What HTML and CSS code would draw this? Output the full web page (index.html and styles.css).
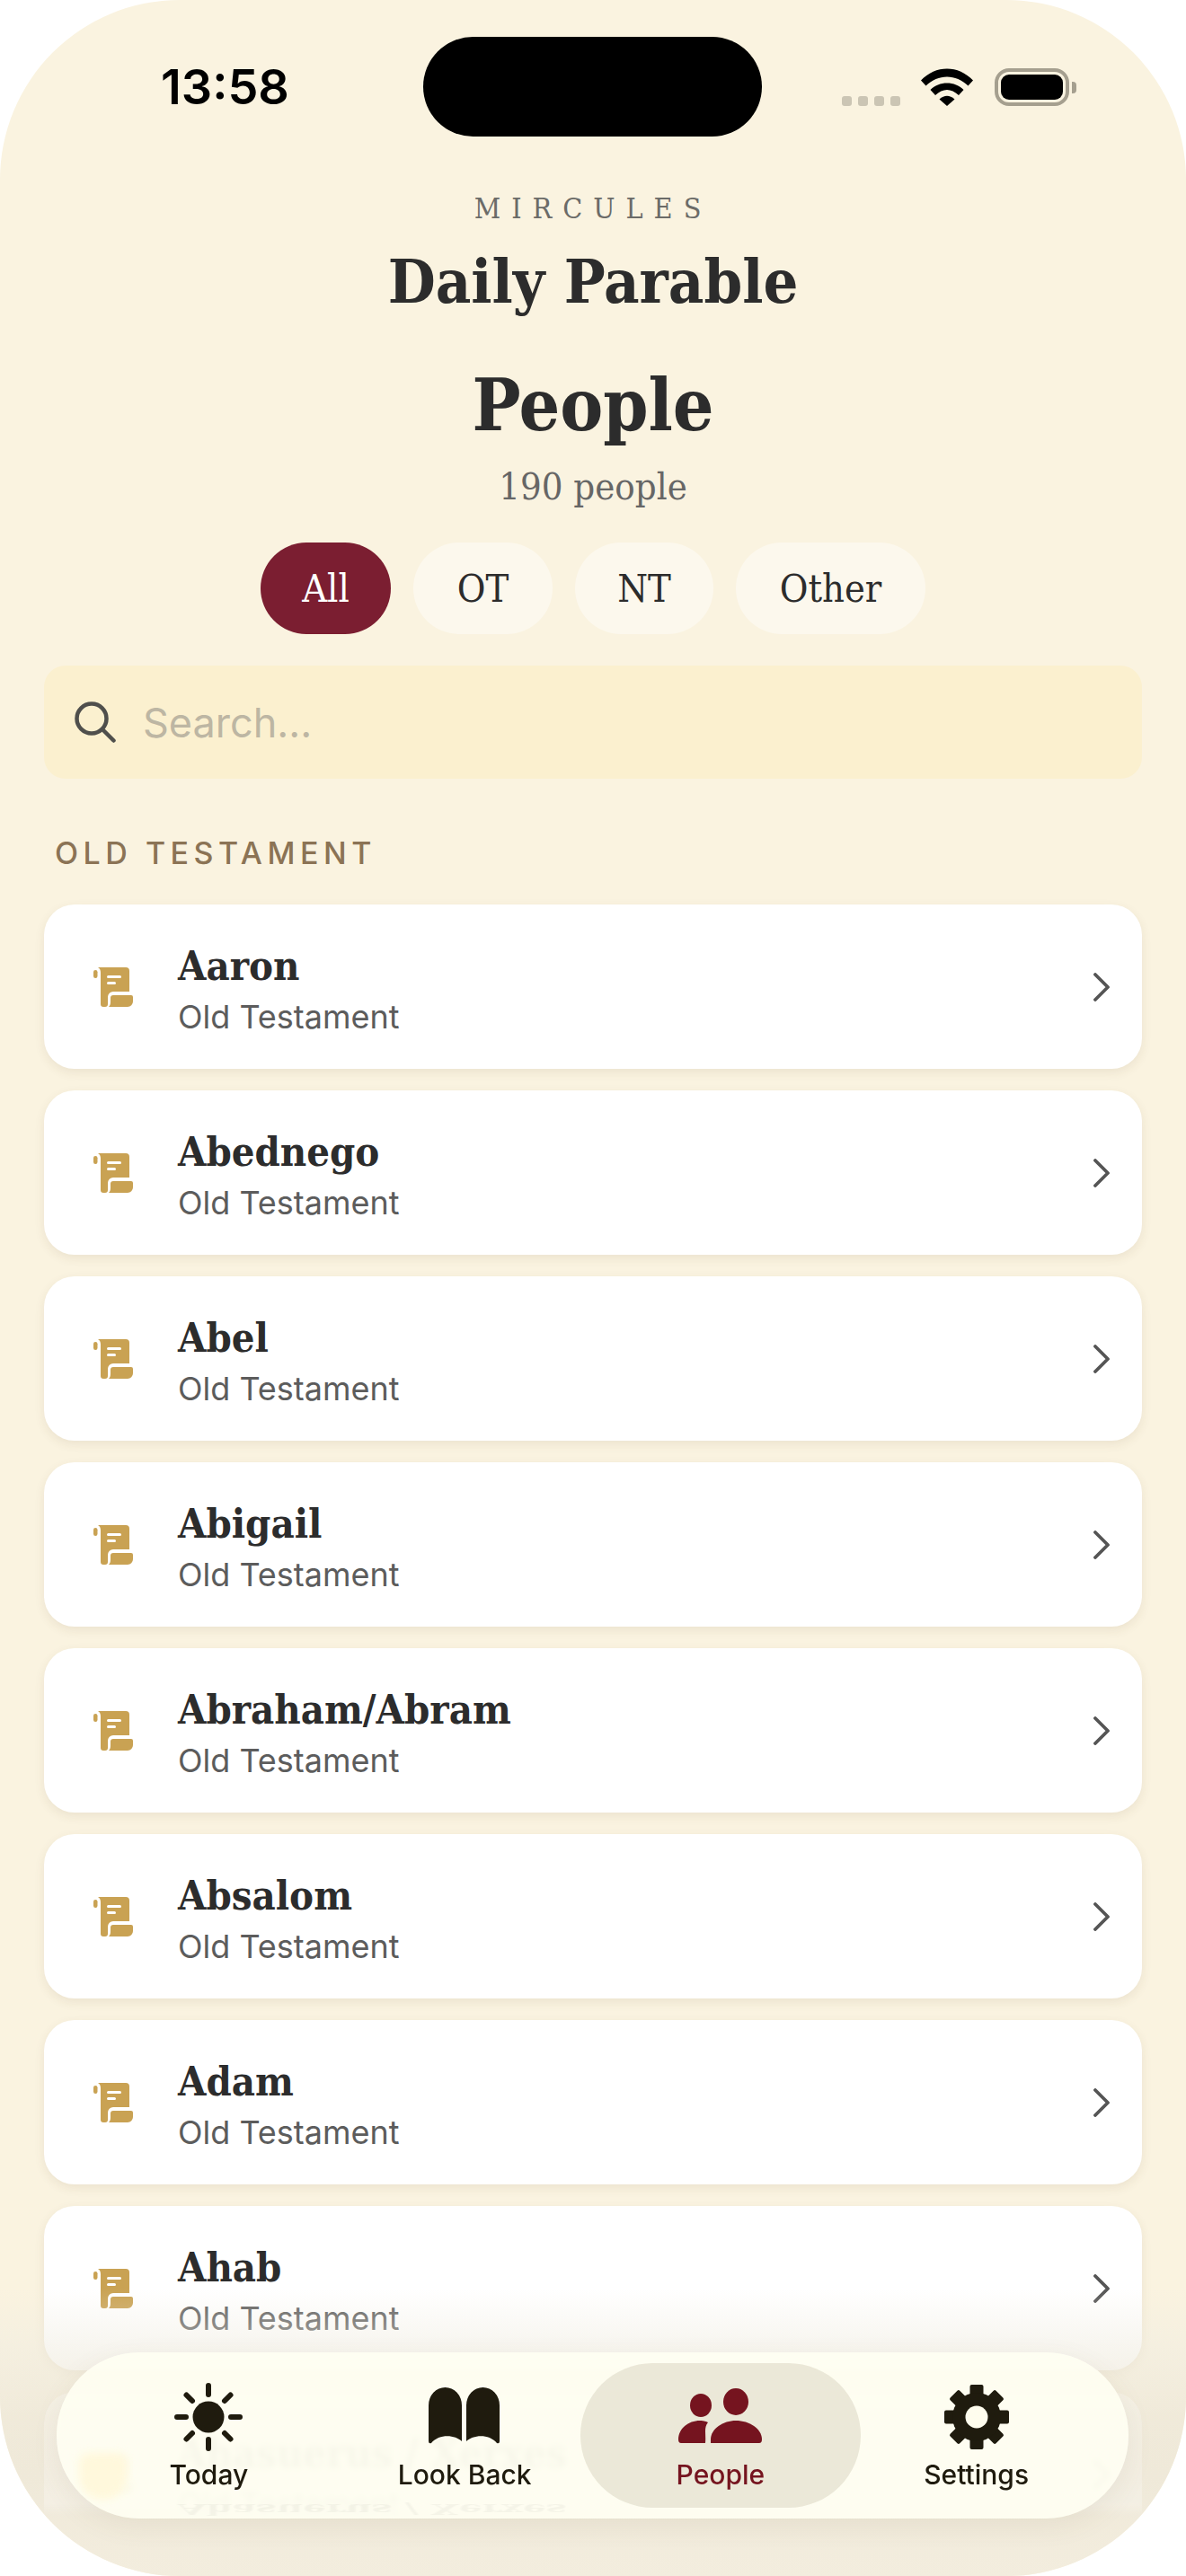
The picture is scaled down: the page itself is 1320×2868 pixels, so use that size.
FILE: index.html
```html
<!DOCTYPE html>
<html lang="en">
<head>
    <meta charset="UTF-8">
    <meta name="viewport" content="width=device-width, initial-scale=1.0">
    <title>Daily Parable - People</title>
    <link rel="stylesheet" href="styles.css">
</head>
<body>
    <svg class="icon-defs" width="0" height="0" aria-hidden="true">
        <symbol id="scroll" viewBox="0 0 44 44">
            <rect x="0" y="3" width="4.5" height="9" rx="2.2"/>
            <path d="M5 0H36a4 4 0 0 1 4 4V27H22a6 6 0 0 0-6 6V41a3 3 0 0 1-3 3H11a3 3 0 0 1-3-3V6C8 3 7 1 5 0Z"/>
            <path d="M22 31H42a2 2 0 0 1 2 2V38a6 6 0 0 1-6 6H17c2-2 2-4 2-7V34a3 3 0 0 1 3-3Z"/>
            <rect x="15" y="9" width="16" height="3" rx="1.500" fill="#fff"/>
            <rect x="15" y="16" width="10" height="3" rx="1.500" fill="#fff"/>
        </symbol>
        <symbol id="chevron" viewBox="0 0 20 32">
            <path d="M2 2L16 16L2 30" fill="none" stroke="currentColor" stroke-width="3.8" stroke-linecap="round" stroke-linejoin="round"/>
        </symbol>
    </svg>

    <div class="phone">
        <div class="status-bar">
            <span class="time">13:58</span>
            <div class="island"></div>
            <div class="status-icons">
                <div class="signal"><i></i><i></i><i></i><i></i></div>
                <svg class="wifi" viewBox="0 0 58 42">
                    <path d="M0 13.5C16 -4 42 -4 58 13.5L52.5 19.500C39 6 19 6 5.500 19.500Z"/>
                    <path d="M10.500 24C20 14 38 14 47.500 24L42 30C33.500 22 24.500 22 16 30Z"/>
                    <path d="M20.500 34.500C26 29.500 32 29.500 37.500 34.500L29 42Z"/>
                </svg>
                <div class="battery"><div class="battery-level"></div></div>
            </div>
        </div>

        <header class="page-header">
            <div class="brand">MIRCULES</div>
            <div class="app-name">Daily Parable</div>
            <h1>People</h1>
            <p class="count">190 people</p>
        </header>

        <div class="filters">
            <button class="chip active">All</button>
            <button class="chip">OT</button>
            <button class="chip">NT</button>
            <button class="chip">Other</button>
        </div>

        <div class="search">
            <svg class="search-icon" viewBox="0 0 46 46">
                <circle cx="19" cy="19" r="16.500"/>
                <path d="M31 31L43.500 43.500"/>
            </svg>
            <span class="search-placeholder">Search...</span>
        </div>

        <h2 class="section-title">OLD TESTAMENT</h2>

        <ul class="person-list">
            <li class="person">
                <svg class="scroll"><use href="#scroll"/></svg>
                <div class="person-text"><div class="person-name">Aaron</div><div class="person-sub">Old Testament</div></div>
                <svg class="chevron"><use href="#chevron"/></svg>
            </li>
            <li class="person">
                <svg class="scroll"><use href="#scroll"/></svg>
                <div class="person-text"><div class="person-name">Abednego</div><div class="person-sub">Old Testament</div></div>
                <svg class="chevron"><use href="#chevron"/></svg>
            </li>
            <li class="person">
                <svg class="scroll"><use href="#scroll"/></svg>
                <div class="person-text"><div class="person-name">Abel</div><div class="person-sub">Old Testament</div></div>
                <svg class="chevron"><use href="#chevron"/></svg>
            </li>
            <li class="person">
                <svg class="scroll"><use href="#scroll"/></svg>
                <div class="person-text"><div class="person-name">Abigail</div><div class="person-sub">Old Testament</div></div>
                <svg class="chevron"><use href="#chevron"/></svg>
            </li>
            <li class="person">
                <svg class="scroll"><use href="#scroll"/></svg>
                <div class="person-text"><div class="person-name">Abraham/Abram</div><div class="person-sub">Old Testament</div></div>
                <svg class="chevron"><use href="#chevron"/></svg>
            </li>
            <li class="person">
                <svg class="scroll"><use href="#scroll"/></svg>
                <div class="person-text"><div class="person-name">Absalom</div><div class="person-sub">Old Testament</div></div>
                <svg class="chevron"><use href="#chevron"/></svg>
            </li>
            <li class="person">
                <svg class="scroll"><use href="#scroll"/></svg>
                <div class="person-text"><div class="person-name">Adam</div><div class="person-sub">Old Testament</div></div>
                <svg class="chevron"><use href="#chevron"/></svg>
            </li>
            <li class="person">
                <svg class="scroll"><use href="#scroll"/></svg>
                <div class="person-text"><div class="person-name">Ahab</div><div class="person-sub">Old Testament</div></div>
                <svg class="chevron"><use href="#chevron"/></svg>
            </li>
            <li class="person">
                <svg class="scroll"><use href="#scroll"/></svg>
                <div class="person-text"><div class="person-name">Ahasuerus / Xerxes</div><div class="person-sub">Old Testament</div></div>
                <svg class="chevron"><use href="#chevron"/></svg>
            </li>
        </ul>

        <div class="bottom-fade"></div>

        <nav class="tab-bar">
            <span class="ghost-title" aria-hidden="true">Ahasuerus / Xerxes</span>
            <a class="tab" href="#">
                <svg class="tab-icon round" width="76" height="76" viewBox="0 0 76 76">
                    <circle cx="38" cy="38" r="17.500"/>
                    <g class="rays">
                        <path d="M38 3V13M38 63V73M3 38H13M63 38H73M13.500 13.500L20 20M56 56L62.500 62.500M62.500 13.500L56 20M20 56L13.500 62.500"/>
                    </g>
                </svg>
                <span>Today</span>
            </a>
            <a class="tab" href="#">
                <svg class="tab-icon" width="80" height="64" viewBox="0 0 80 64">
                    <path d="M0 20A18.500 20 0 0 1 37 20V60C30 53 12 51 3 62Q0 63 0 60Z"/>
                    <path d="M42 20A18.500 20 0 0 1 79 20V60Q79 63 76 62C67 51 49 53 42 60Z"/>
                </svg>
                <span>Look Back</span>
            </a>
            <a class="tab active" href="#">
                <svg class="tab-icon" width="94" height="64" viewBox="0 0 94 64">
                    <ellipse cx="25" cy="20" rx="12" ry="13"/>
                    <ellipse cx="64" cy="16" rx="14" ry="15"/>
                    <path d="M0 58C0 46 11 37 24 37C28 37 31 38 33 39C28 45 31 52 30 62H3Q0 62 0 58Z"/>
                    <path d="M36 62Q36 62 36 58C36 46 50 37 64 37C79 37 93 46 93 58Q93 62 90 62Z"/>
                </svg>
                <span>People</span>
            </a>
            <a class="tab" href="#">
                <svg class="tab-icon round" width="76" height="76" viewBox="0 0 76 76">
                    <g transform="translate(38 38)">
                        <rect x="-7.500" y="-36" width="15" height="72" rx="2"/>
                        <rect x="-7.500" y="-36" width="15" height="72" rx="2" transform="rotate(45)"/>
                        <rect x="-7.500" y="-36" width="15" height="72" rx="2" transform="rotate(90)"/>
                        <rect x="-7.500" y="-36" width="15" height="72" rx="2" transform="rotate(135)"/>
                        <circle r="27"/>
                        <circle class="gear-hole" r="12.500"/>
                    </g>
                </svg>
                <span>Settings</span>
            </a>
        </nav>
    </div>
</body>
</html>
```

FILE: styles.css
```css
* {
    box-sizing: border-box;
}

body {
    margin: 0;
    background-color: #fff;
    font-family: 'Inter', sans-serif;
    color: #2c2c2c;
}

.icon-defs {
    position: absolute;
}

.phone {
    position: relative;
    width: 1320px;
    height: 2868px;
    overflow: hidden;
    border-radius: 200px;
    background-color: #faf3e0;
    padding: 0 49px;
}

/* status bar */
.status-bar {
    display: flex;
    align-items: center;
    height: 152px;
    padding-top: 41px;
    margin: 0 -49px;
}

.time {
    width: 471px;
    padding-left: 179px;
    font-size: 54px;
    font-weight: 600;
    color: #000;
}

.island {
    width: 377px;
    height: 111px;
    border-radius: 56px;
    background-color: #000;
}

.status-icons {
    display: flex;
    align-items: flex-end;
    margin-left: 89px;
}

.signal {
    display: flex;
    gap: 7px;
    margin-right: 23px;
}

.signal i {
    width: 11px;
    height: 11px;
    border-radius: 3px;
    background-color: #cbc5b4;
}

.wifi {
    width: 58px;
    height: 42px;
    margin-right: 24px;
}

.battery {
    position: relative;
    width: 83px;
    height: 42px;
    padding: 3px;
    border: 4px solid #a59f8f;
    border-radius: 16px;
}

.battery::after {
    content: "";
    position: absolute;
    right: -12px;
    top: 11px;
    width: 5px;
    height: 13px;
    border-radius: 0 4px 4px 0;
    background-color: #a59f8f;
}

.battery-level {
    height: 100%;
    border-radius: 9px;
    background-color: #000;
}

/* header */
.page-header {
    text-align: center;
    font-family: 'DejaVu Serif', 'Liberation Serif', serif;
    font-stretch: condensed;
}

.brand {
    margin-top: 60px;
    font-size: 32px;
    line-height: 40px;
    letter-spacing: 12px;
    color: #6b6b68;
}

.app-name {
    margin-top: 17px;
    font-size: 68px;
    line-height: 88px;
    font-weight: 700;
}

.page-header h1 {
    margin: 44px 0 0;
    font-size: 80px;
    line-height: 100px;
    font-weight: 700;
}

.count {
    margin: 14px 0 0;
    font-size: 41.500px;
    line-height: 54px;
    color: #666;
}

/* filter chips */
.filters {
    display: grid;
    grid-template-columns: 145px 155px 154px 211px;
    justify-content: center;
    gap: 25px;
    margin-top: 35px;
}

.chip {
    height: 102px;
    padding: 0;
    border: none;
    border-radius: 51px;
    background-color: #fcf8ed;
    font-family: 'DejaVu Serif', 'Liberation Serif', serif;
    font-stretch: condensed;
    font-size: 43px;
    color: #2c2c2c;
}

.chip.active {
    background-color: #7b1e31;
    color: #fff;
}

/* search */
.search {
    display: flex;
    align-items: center;
    gap: 30px;
    height: 126px;
    margin-top: 35px;
    padding: 0 34px;
    border-radius: 24px;
    background-color: #fbf0cf;
}

.search-icon {
    width: 46px;
    height: 46px;
    fill: none;
    stroke: #4f4f4c;
    stroke-width: 4.5;
    stroke-linecap: round;
}

.search-placeholder {
    font-size: 45px;
    color: #bdb6a3;
}

.section-title {
    margin: 63px 0 0 12px;
    font-size: 34px;
    line-height: 40px;
    font-weight: 500;
    letter-spacing: 5.500px;
    color: #8b7355;
}

/* person rows */
.person-list {
    display: flex;
    flex-direction: column;
    gap: 24px;
    margin: 37px 0 0;
    padding: 0;
    list-style: none;
}

.person {
    display: flex;
    align-items: center;
    flex-shrink: 0;
    height: 183px;
    padding: 0 34px 0 55px;
    border-radius: 34px;
    background-color: #fff;
    box-shadow: 0 4px 12px rgba(90, 70, 30, 0.09);
}

/* this row only shows faintly through the tab bar */
.person:last-child {
    position: relative;
    z-index: 1;
    opacity: 0.25;
    box-shadow: none;
    mask-image: linear-gradient(to bottom, #000 68%, transparent 76%);
}

.scroll {
    width: 44px;
    height: 44px;
    fill: #c9a253;
    flex-shrink: 0;
}

.person-text {
    flex: 1;
    margin-left: 50px;
    padding-top: 3px;
}

.person-name {
    font-family: 'DejaVu Serif', 'Liberation Serif', serif;
    font-stretch: condensed;
    font-size: 45px;
    line-height: 58px;
    font-weight: 700;
}

.person-sub {
    margin-top: 5px;
    font-size: 36px;
    line-height: 44px;
    color: #5c5c5c;
}

.chevron {
    width: 20px;
    height: 32px;
    color: #555;
}

/* tab bar */
.bottom-fade {
    position: absolute;
    left: 0;
    right: 0;
    bottom: 0;
    height: 320px;
    background: linear-gradient(to bottom, rgba(240, 236, 224, 0), rgba(240, 236, 224, 0.5) 20%, rgba(239, 233, 217, 0.9) 45%, #efe9d9 65%, #f3edde);
}

.tab-bar {
    position: absolute;
    z-index: 2;
    left: 63px;
    top: 2619px;
    width: 1193px;
    height: 185px;
    display: grid;
    grid-template-columns: repeat(4, 1fr);
    padding: 12px 27px;
    border-radius: 92px;
    background-color: rgba(255, 255, 242, 0.88);
    backdrop-filter: blur(3px);
    overflow: hidden;
    box-shadow: 0 8px 30px rgba(100, 85, 50, 0.08);
}

/* blurred reflection of the row behind the bar */
.tab-bar::before {
    content: "";
    position: absolute;
    left: 25px;
    top: 112px;
    width: 53px;
    height: 52px;
    border-radius: 10px 10px 26px 26px;
    background-color: #fff8dc;
    filter: blur(5px);
}

.ghost-title {
    position: absolute;
    left: 135px;
    bottom: -18px;
    font-family: 'DejaVu Serif', 'Liberation Serif', serif;
    font-stretch: condensed;
    font-size: 45px;
    line-height: 58px;
    font-weight: 700;
    color: #2c2c2c;
    opacity: 0.04;
    filter: blur(1px);
    transform: scaleY(-0.35);
}

.tab {
    position: relative;
    display: flex;
    flex-direction: column;
    align-items: center;
    justify-content: flex-end;
    padding-bottom: 18px;
    text-decoration: none;
    font-size: 30px;
    line-height: 38px;
    font-weight: 500;
    color: #1f1b0e;
}

.tab.active {
    margin: 0 -14px;
    border-radius: 81px;
    background-color: #ebe8d8;
    color: #75141f;
}

.tab-icon {
    display: block;
    margin-bottom: 14px;
    fill: #1f1b0e;
}

.tab-icon.round {
    margin-bottom: 7px;
}

.tab.active .tab-icon {
    fill: #75141f;
}

.rays {
    fill: none;
    stroke: #1f1b0e;
    stroke-width: 6;
    stroke-linecap: round;
}

.gear-hole {
    fill: #fffdee;
}
```
